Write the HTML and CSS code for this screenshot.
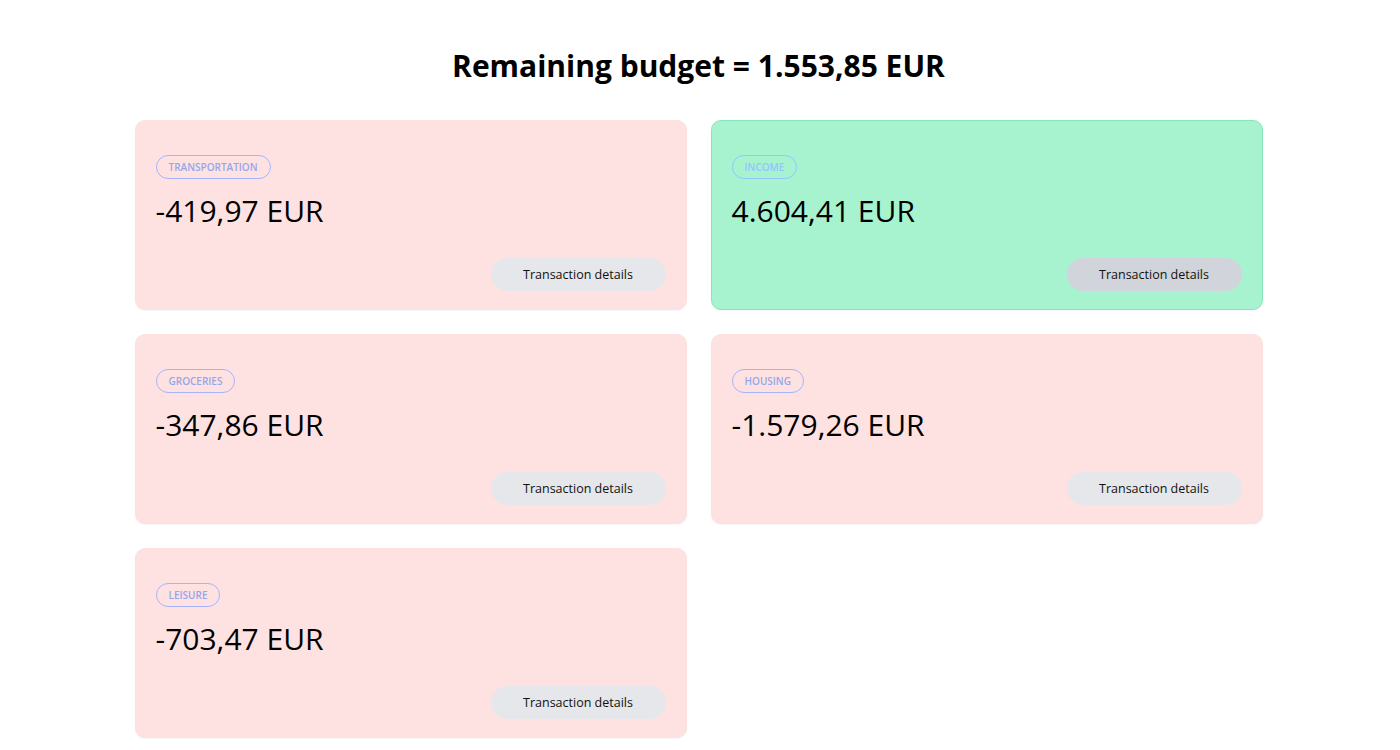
FILE: index.html
```html
<!DOCTYPE html>
<html lang="en">
<head>
<meta charset="utf-8">
<title>Budget</title>
<link rel="stylesheet" href="styles.css">
</head>
<body>
<main class="page">
  <h1 class="title">Remaining budget = 1.553,85 EUR</h1>
  <section class="grid">
    <article class="card card-expense">
      <span class="tag">Transportation</span>
      <div class="amount">-419,97 EUR</div>
      <button class="details">Transaction details</button>
    </article>
    <article class="card card-income">
      <span class="tag">Income</span>
      <div class="amount">4.604,41 EUR</div>
      <button class="details">Transaction details</button>
    </article>
    <article class="card card-expense">
      <span class="tag">Groceries</span>
      <div class="amount">-347,86 EUR</div>
      <button class="details">Transaction details</button>
    </article>
    <article class="card card-expense">
      <span class="tag">Housing</span>
      <div class="amount">-1.579,26 EUR</div>
      <button class="details">Transaction details</button>
    </article>
    <article class="card card-expense">
      <span class="tag">Leisure</span>
      <div class="amount">-703,47 EUR</div>
      <button class="details">Transaction details</button>
    </article>
  </section>
</main>
</body>
</html>
```
FILE: styles.css
```css
html, body {
  margin: 0;
  padding: 0;
  background: #ffffff;
}
body {
  font-family: "Open Sans", "Liberation Sans", sans-serif;
  color: #000;
}
.page {
  padding-top: 48px;
  padding-right: 3px;
  padding-bottom: 40px;
}
.title {
  margin: 0 0 36px;
  text-align: center;
  font-size: 30px;
  line-height: 36px;
  font-weight: 700;
}
.grid {
  width: 1128px;
  margin: 0 auto;
  display: grid;
  grid-template-columns: 552px 552px;
  gap: 24px;
}
.card {
  box-sizing: border-box;
  height: 190px;
  border-radius: 10px;
  padding: 34px 20px 18px 20px;
  display: flex;
  flex-direction: column;
  align-items: flex-start;
  border: 1px solid transparent;
  box-shadow: 0 1px 2px rgba(0, 0, 0, 0.04);
}
.card-expense {
  background: #fee2e2;
  border-color: #fde0e0;
}
.card-income {
  background: #a7f3d0;
  border-color: #86e5bb;
}
.tag {
  box-sizing: border-box;
  height: 24px;
  display: inline-flex;
  align-items: center;
  padding: 0 12px;
  border: 1px solid #a5b4fc;
  border-radius: 12px;
  color: #95a6ec;
  font-size: 10px;
  font-weight: 600;
  text-transform: uppercase;
  letter-spacing: 0;
}
.card-income .tag {
  border-color: #93c5fd;
  color: #93c5fd;
}
.amount {
  margin-top: 14px;
  font-size: 30px;
  line-height: 36px;
  font-weight: 400;
  color: #000;
}
.details {
  margin-top: auto;
  align-self: flex-end;
  width: 175px;
  height: 33px;
  border: none;
  border-radius: 17px;
  background: #e5e7eb;
  color: #111;
  font-family: "Open Sans", "Liberation Sans", sans-serif;
  font-size: 12.5px;
  font-weight: 500;
  padding: 0;
  cursor: pointer;
}
.card-income .details {
  background: #d1d5db;
}
```
